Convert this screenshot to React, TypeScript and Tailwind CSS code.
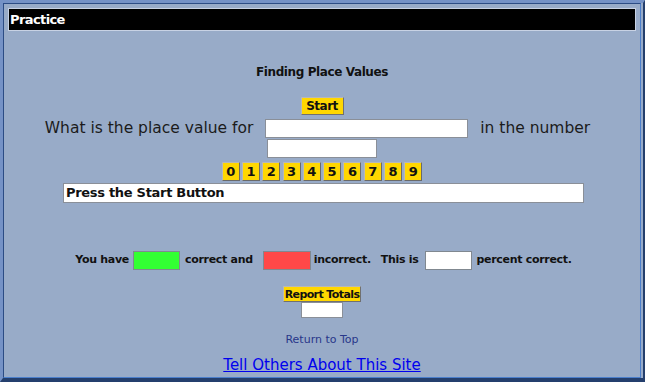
import React from "react";

const digits = ["0", "1", "2", "3", "4", "5", "6", "7", "8", "9"];

export default function App() {
  return (
    <div className="w-[645px] h-[382px] bg-[#98abc8] font-['DejaVu_Sans',Verdana,sans-serif] text-[#111] overflow-hidden border-t-[3px] border-l-[3px] border-r-[2px] border-b-[4px] border-t-[#7592c6] border-l-[#7592c6] border-r-[#243f6d] border-b-[#243f6d]">
      <div className="h-full border border-t-[#2c4c84] border-l-[#2c4c84] border-r-[#4b7fcc] border-b-[#4b7fcc] mr-[2px] p-[4px] flex flex-col items-center [&>*]:shrink-0">
        <div className="w-full h-[23px] bg-black border border-[#c8d2e4] flex items-center px-[1px]">
          <span className="text-white font-bold text-[13px] leading-none font-['DejaVu_Sans',sans-serif] tracking-[-0.6px]">Practice</span>
        </div>

        <div className="mt-[33px] h-[16px] leading-[16px] text-[12px] font-bold tracking-[-0.4px]">Finding Place Values</div>

        <button className="mt-[17px] h-[18px] w-[43px] bg-[#ffd700] border border-t-[#b8b8b8] border-l-[#b8b8b8] border-r-[#707070] border-b-[#707070] text-[12px] font-bold leading-none tracking-[-0.5px] p-0">
          Start
        </button>

        <div className="mt-[3px] mr-[9px] w-[600px] text-center text-[15.5px] leading-[20px] text-[#1b1b1b]">
          <span>What is the place value for</span>
          <span className="inline-block w-[12px]" />
          <span className="inline-block align-middle w-[203px] h-[19px] bg-white border border-[#8a8f98]" />
          <span className="inline-block w-[12px]" />
          <span>in the number</span>
          <br />
          <span className="inline-block align-middle w-[110px] h-[19px] bg-white border border-[#8a8f98] ml-[9px]" />
        </div>

        <div className="mt-[4px] flex gap-[2.3px]">
          {digits.map((d) => (
            <div
              key={d}
              className="w-[18px] h-[19px] bg-[#ffd700] border border-t-[#b8b8b8] border-l-[#b8b8b8] border-r-[#6a6a6a] border-b-[#6a6a6a] flex items-center justify-center text-[13px] font-bold leading-none"
            >
              {d}
            </div>
          ))}
        </div>

        <div className="mt-[2px] w-[521px] h-[20px] bg-white border border-[#8a8f98] flex items-center px-[2px] text-[13px] font-bold tracking-[-0.3px] ml-[3px]">
          Press the Start Button
        </div>

        <div className="mt-[47px] flex items-center text-[11px] font-bold tracking-[-0.3px] h-[20px] ml-[3px]">
          <span>You have</span>
          <span className="ml-[4px] w-[47px] h-[19px] bg-[#33ff33] border border-[#808890]" />
          <span className="ml-[5px]">correct and</span>
          <span className="ml-[10px] w-[48px] h-[19px] bg-[#ff4848] border border-[#808890]" />
          <span className="ml-[3px]">incorrect.</span>
          <span className="ml-[10px]">This is</span>
          <span className="ml-[7px] w-[47px] h-[19px] bg-white border border-[#808890]" />
          <span className="ml-[4px]">percent correct.</span>
        </div>

        <button className="mt-[16px] h-[16px] w-[78px] bg-[#ffd700] border border-t-[#b8b8b8] border-l-[#b8b8b8] border-r-[#707070] border-b-[#707070] text-[11px] font-bold leading-none tracking-[-0.6px] p-0 whitespace-nowrap overflow-hidden">
          Report Totals
        </button>
        <div className="w-[42px] h-[16px] bg-white border border-[#8a8f98]" />

        <div className="mt-[15px] h-[14px] leading-[14px] text-[11px] text-[#28378a]">Return to Top</div>

        <a href="#" className="mt-[9px] h-[18px] leading-[18px] text-[15px] text-[#0000ee] underline">
          Tell Others About This Site
        </a>
      </div>
    </div>
  );
}
